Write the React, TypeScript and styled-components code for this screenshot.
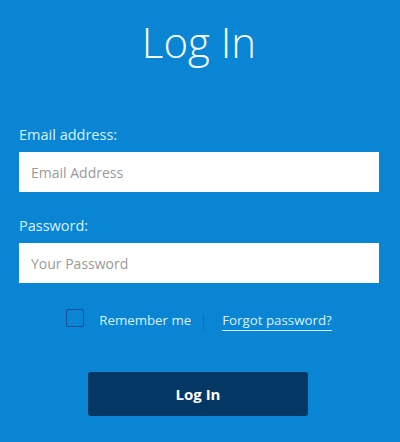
import React from "react";
import styled, { createGlobalStyle } from "styled-components";

const Global = createGlobalStyle`
  html, body { margin: 0; padding: 0; }
  body { background: #0a85d3; font-family: "Open Sans", "Liberation Sans", sans-serif; }
  * { box-sizing: border-box; }
`;

const Page = styled.div`
  width: 400px;
  height: 442px;
  background: #0a85d3;
  padding: 21px 21px 0 19px;
  display: flex;
  flex-direction: column;
`;

const Title = styled.h1`
  margin: 0;
  font-size: 42px;
  line-height: 42px;
  font-weight: 300;
  color: #f4fbff;
  text-align: center;
`;

const Form = styled.form`
  display: flex;
  flex-direction: column;
  margin-top: 61px;
`;

const Field = styled.div<{ $gap?: number }>`
  display: flex;
  flex-direction: column;
  margin-top: ${(p) => p.$gap ?? 0}px;
`;

const Label = styled.label`
  font-size: 14.5px;
  line-height: 22px;
  color: #d9f2ff;
  margin-bottom: 6px;
`;

const Input = styled.input`
  width: 360px;
  height: 40px;
  border: none;
  outline: none;
  background: #ffffff;
  padding: 0 12px;
  font-family: "Open Sans", "Liberation Sans", sans-serif;
  font-size: 14px;
  color: #333;
  &::placeholder { color: #9a9a9a; }
`;

const OptionsRow = styled.div`
  display: flex;
  align-items: center;
  justify-content: center;
  margin-top: 26px;
  height: 18px;
`;

const Check = styled.input.attrs({ type: "checkbox" })`
  appearance: none;
  width: 18px;
  height: 18px;
  margin: 0 15px 0 0;
  border: 1px solid #1b4f96;
  background: transparent;
  border-radius: 1px;
`;

const OptionText = styled.span`
  font-size: 13.3px;
  line-height: 18px;
  color: #d9f2ff;
  margin-top: 3px;
`;

const Divider = styled.span`
  width: 1px;
  height: 16px;
  background: #2a679f;
  margin: 8px 18px 0 12px;
`;

const ForgotLink = styled.a`
  font-size: 13.3px;
  line-height: 18px;
  color: #d9f2ff;
  text-decoration: none;
  border-bottom: 1px solid #d9f2ff;
  padding-bottom: 1px;
  margin-top: 5px;
  cursor: pointer;
`;

const Submit = styled.button`
  align-self: center;
  margin: 45px 0 0 -2px;
  width: 220px;
  height: 44px;
  border: none;
  border-radius: 3px;
  background: #053764;
  color: #ffffff;
  font-family: "Open Sans", "Liberation Sans", sans-serif;
  font-size: 15px;
  font-weight: 700;
  cursor: pointer;
`;

export default function App() {
  return (
    <>
      <Global />
      <Page>
        <Title>Log In</Title>
        <Form onSubmit={(e) => e.preventDefault()}>
          <Field>
            <Label htmlFor="email">Email address:</Label>
            <Input id="email" type="email" placeholder="Email Address" />
          </Field>
          <Field $gap={23}>
            <Label htmlFor="password">Password:</Label>
            <Input id="password" type="password" placeholder="Your Password" />
          </Field>
          <OptionsRow>
            <Check aria-label="Remember me" />
            <OptionText>Remember me</OptionText>
            <Divider />
            <ForgotLink>Forgot password?</ForgotLink>
          </OptionsRow>
          <Submit type="submit">Log In</Submit>
        </Form>
      </Page>
    </>
  );
}
